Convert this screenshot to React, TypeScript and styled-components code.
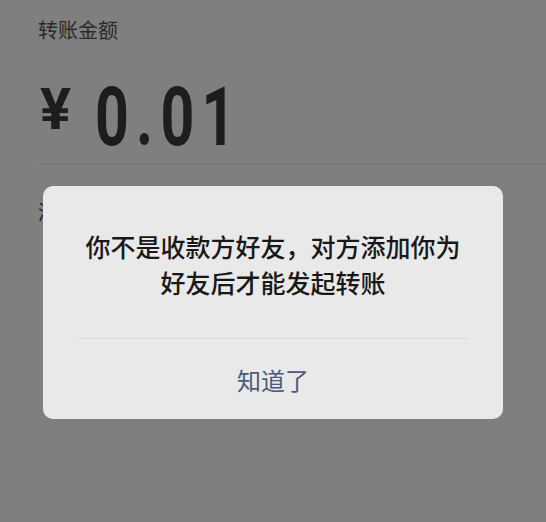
import styled, { createGlobalStyle } from "styled-components";

const GlobalStyle = createGlobalStyle`
  html, body, #root {
    margin: 0;
    height: 100%;
  }
  body {
    background: #ffffff;
    font-family: "Noto Sans CJK SC", "Noto Sans", sans-serif;
  }
`;

const Page = styled.div`
  height: 100%;
  padding: 16px 0 0 38px;
  box-sizing: border-box;
  background: #ffffff;
`;

const Label = styled.div`
  font-size: 20px;
  line-height: 28px;
  color: #555555;
`;

const AmountRow = styled.div`
  display: flex;
  align-items: flex-start;
  margin-top: 32px;
  padding-bottom: 6px;
  border-bottom: 1px solid #eeeeee;
`;

const Yen = styled.span`
  font-family: Roboto, "Liberation Sans", sans-serif;
  font-weight: 700;
  font-size: 58px;
  line-height: 1;
  margin: 4px 24px 0 2px;
  color: #3a3a3a;
`;

const Digits = styled.span`
  display: inline-block;
  font-family: Roboto, "Liberation Sans", sans-serif;
  font-weight: 700;
  font-size: 82px;
  line-height: 1;
  letter-spacing: 10px;
  color: #3a3a3a;
  transform: scaleX(0.72);
  transform-origin: left center;
`;

const Note = styled.div`
  margin-top: 33px;
  font-size: 20px;
  line-height: 28px;
  color: #2b3f66;
`;

const Mask = styled.div`
  position: fixed;
  inset: 0;
  background: rgba(0, 0, 0, 0.5);
  display: flex;
  flex-direction: column;
  align-items: center;
  padding-top: 186px;
`;

const Dialog = styled.div`
  width: 460px;
  background: #e9e9e9;
  border-radius: 10px;
  display: flex;
  flex-direction: column;
`;

const Message = styled.div`
  padding: 43px 36px 38px;
  font-size: 25px;
  font-weight: 500;
  line-height: 35.5px;
  color: #181818;
  text-align: center;
`;

const Divider = styled.div`
  height: 1px;
  margin: 0 34px;
  background: #d9d9d9;
`;

const Action = styled.button`
  height: 80px;
  border: none;
  background: transparent;
  font-family: "Noto Sans CJK SC", sans-serif;
  font-size: 24px;
  color: #4d5a80;
  padding: 0;
  cursor: pointer;
`;

export default function App() {
  return (
    <>
      <GlobalStyle />
      <Page>
        <Label>转账金额</Label>
        <AmountRow>
          <Yen>¥</Yen>
          <Digits>0.01</Digits>
        </AmountRow>
        <Note>添加转账说明</Note>
      </Page>
      <Mask>
        <Dialog>
          <Message>你不是收款方好友，对方添加你为好友后才能发起转账</Message>
          <Divider />
          <Action>知道了</Action>
        </Dialog>
      </Mask>
    </>
  );
}
